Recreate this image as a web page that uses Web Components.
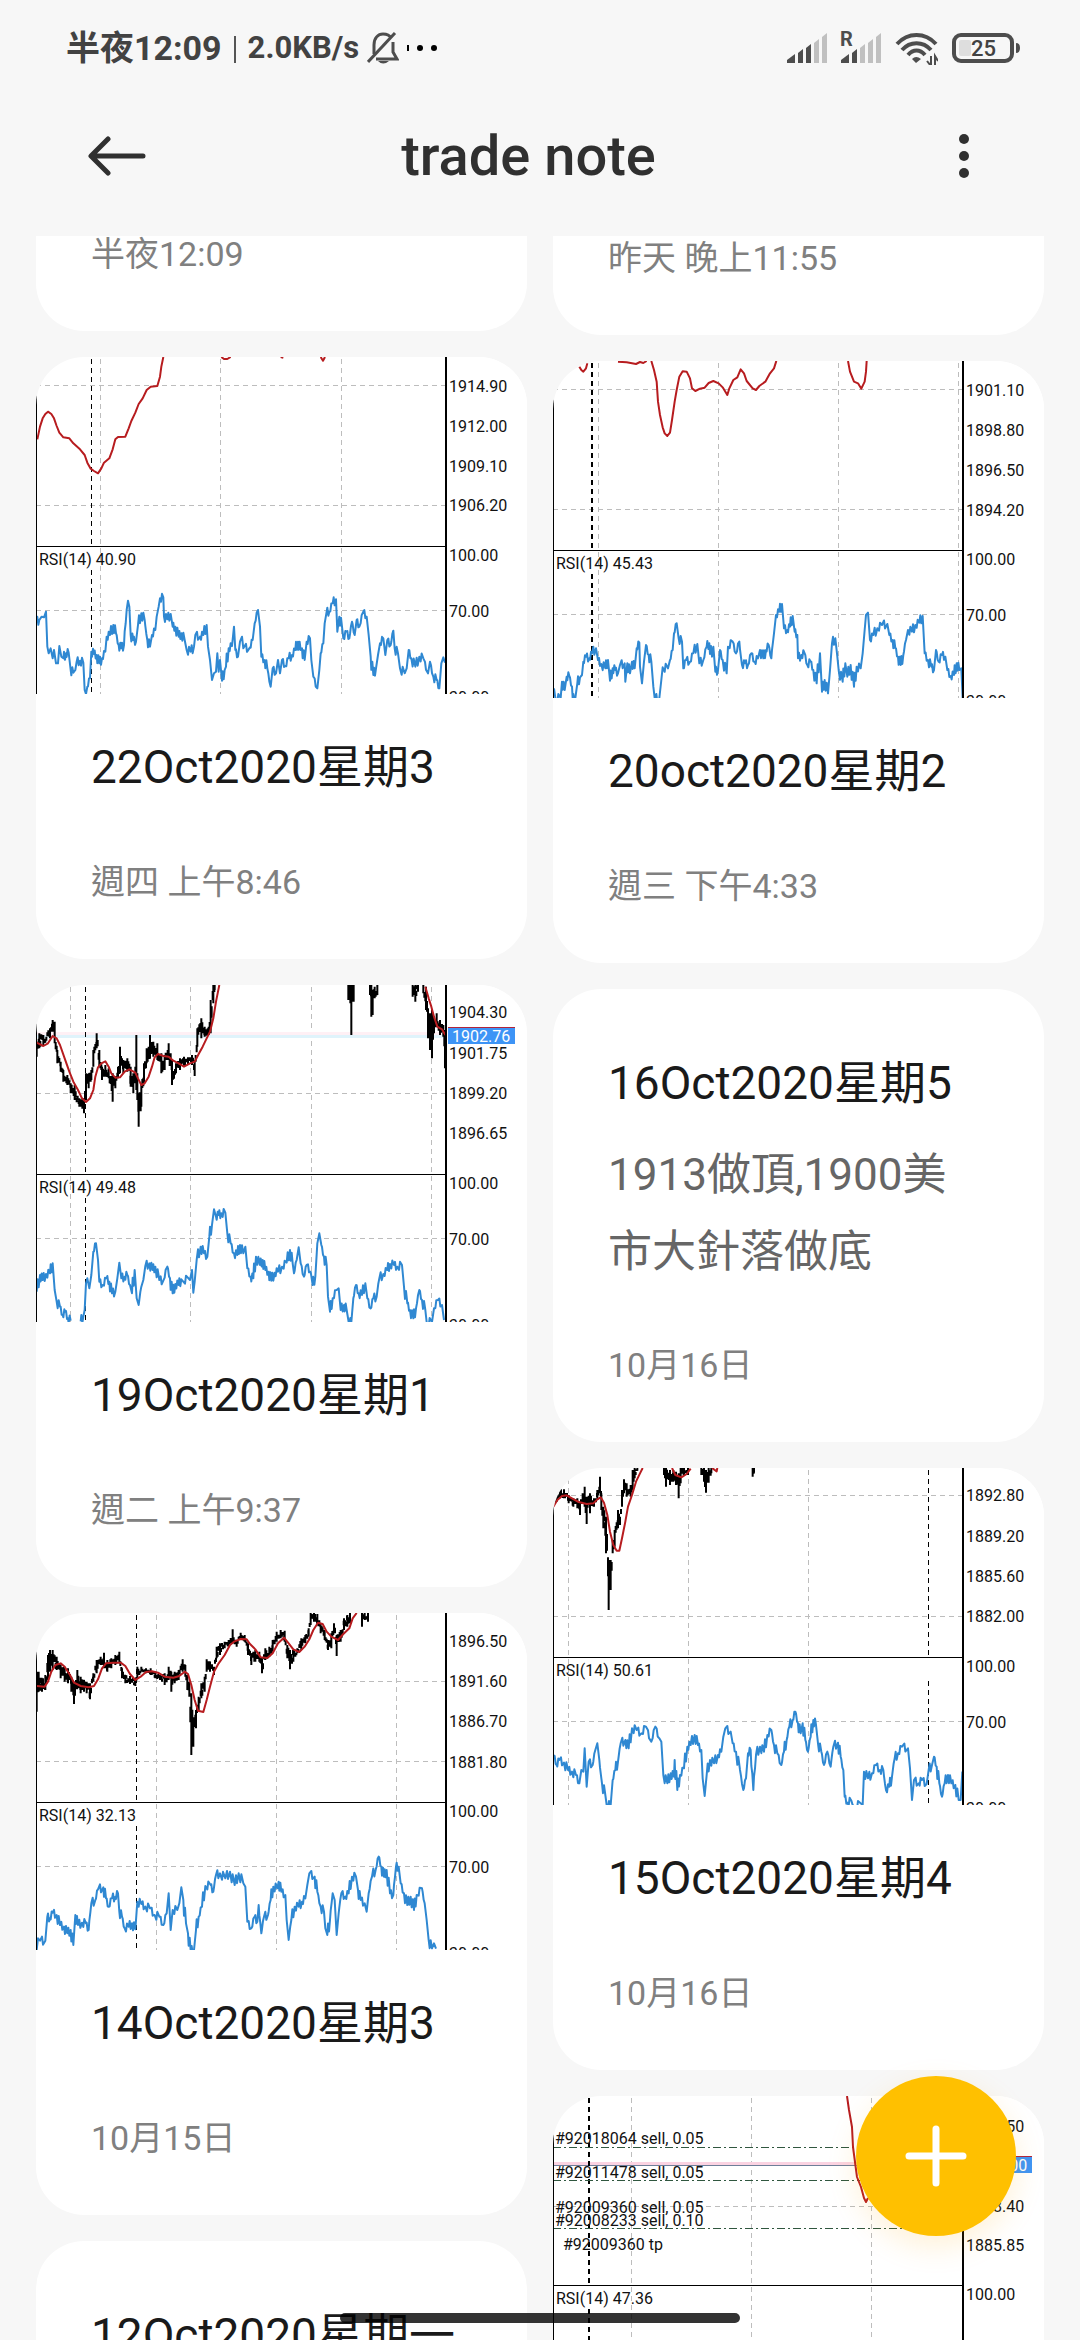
<!DOCTYPE html>
<html lang="zh-Hant">
<head>
<meta charset="utf-8">
<meta name="viewport" content="width=device-width, initial-scale=1">
<title>trade note</title>
<style>
  html, body {
    margin: 0;
    height: 100%;
  }

  body {
    background: #f7f7f7;
    color: #1a1a1a;
    font-family: Roboto, "Noto Sans CJK TC", sans-serif;
    overflow: hidden;
  }
</style>
</head>
<body>

<note-app>
  <status-bar slot="status"></status-bar>
  <app-header slot="header">trade note</app-header>

  <note-column slot="left">
    <note-card>
      <time slot="date">半夜12:09</time>
    </note-card>
    <note-card>
      <price-chart slot="cover" name="oct22"></price-chart>
      <span slot="title">22Oct2020星期3</span>
      <time slot="date">週四 上午8:46</time>
    </note-card>
    <note-card>
      <price-chart slot="cover" name="oct19"></price-chart>
      <span slot="title">19Oct2020星期1</span>
      <time slot="date">週二 上午9:37</time>
    </note-card>
    <note-card>
      <price-chart slot="cover" name="oct14"></price-chart>
      <span slot="title">14Oct2020星期3</span>
      <time slot="date">10月15日</time>
    </note-card>
    <note-card>
      <span slot="title">12Oct2020星期一</span>
    </note-card>
  </note-column>

  <note-column slot="right">
    <note-card>
      <time slot="date">昨天 晚上11:55</time>
    </note-card>
    <note-card>
      <price-chart slot="cover" name="oct20"></price-chart>
      <span slot="title">20oct2020星期2</span>
      <time slot="date">週三 下午4:33</time>
    </note-card>
    <note-card>
      <span slot="title">16Oct2020星期5</span>
      <span slot="text">1913做頂,1900美市大針落做底</span>
      <time slot="date">10月16日</time>
    </note-card>
    <note-card>
      <price-chart slot="cover" name="oct15"></price-chart>
      <span slot="title">15Oct2020星期4</span>
      <time slot="date">10月16日</time>
    </note-card>
    <note-card>
      <price-chart slot="cover" name="orders"></price-chart>
    </note-card>
  </note-column>

  <add-button slot="action"></add-button>
</note-app>

<script>
// Curves are stored at 3 units per pixel, `origin` is the top left corner.
// price: "x,high,low" envelope, ma and rsi: "x,y" points, ";" starts a new run.
const CHARTS = {
  oct22: {
    origin: [18, 51],
    labels: [['1914.90', 29], ['1912.00', 69], ['1909.10', 109], ['1906.20', 148]],
    cols: [64, 184, 305], rows: [28, 148], cursor: 55, rsiValue: '40.90',
    ma: '22,298 30,260 38,235 46,222 54,215 64,222 72,235 80,258 88,278 100,292 118,295 130,310 150,328 164,345 172,368 182,386 192,393 204,400 214,385 222,368 238,355 248,328 256,298 264,291 286,290 296,265 304,243 316,218 326,192 338,175 350,150 362,140 382,138 390,110 394,80 400,51;574,51 582,57 592,57 602,51;752,51 760,53;872,51 879,62 885,51',
    rsi: '20,845 28,840 35,830 42,832 48,815 52,920 56,940 62,925 68,955 72,930 78,970 84,970 88,918 94,950 100,955 108,940 116,938 122,990 130,998 136,990 140,965 150,962 160,968 164,1050 168,1062 172,1040 180,1015 184,935 192,942 200,945 208,970 216,955 226,935 230,890 240,885 250,855 258,880 266,915 274,925 282,915 290,810 294,782 298,800 302,885 310,900 318,905 324,855 334,820 344,840 352,900 360,920 366,885 376,870 380,830 386,800 390,775 400,772 402,830 412,838 422,822 428,860 436,860 446,890 454,880 464,900 470,930 482,935 492,920 496,885 510,890 520,885 530,855 534,920 540,960 546,1020 552,1000 558,995 562,940 566,995 570,960 576,1022 584,990 588,980 596,925 606,918 612,860 616,930 624,950 630,905 636,890 640,925 660,922 668,900 674,850 684,810 690,860 694,950 704,960 712,985 722,1040 728,985 738,1000 744,960 750,1000 756,960 766,978 776,955 786,945 796,930 804,905 812,930 816,925 824,960 830,905 840,895 844,960 850,1010 862,1045 868,990 872,940 880,910 884,850 890,815 898,815 908,790 918,778 922,875 928,830 936,860 940,895 950,875 958,895 966,845 974,885 980,840 988,860 1000,815 1010,830 1016,885 1022,950 1030,1005 1038,985 1044,945 1050,910 1060,895 1066,945 1072,900 1082,915 1090,872 1094,925 1104,940 1110,985 1124,1000 1130,985 1136,930 1144,955 1156,980 1168,950 1180,955 1194,1000 1200,965 1210,1010 1220,1020 1228,1045 1234,970 1240,952 1245,968'
  },
  oct20: {
    origin: [39, 63],
    labels: [['1901.10', 29], ['1898.80', 69], ['1896.50', 109], ['1894.20', 149]],
    cols: [45, 165, 285, 405], rows: [28, 148], cursor: 39, boldCursor: true, rsiValue: '45.43',
    ma: '118,80 124,90 130,95 138,85 142,70;234,65 260,67 288,72 300,66 310,69 320,63;334,63 342,90 350,125 354,185 360,225 368,262 374,280 382,288 390,278 396,240 404,185 410,150 418,110 428,94 440,95 450,115 456,145 466,153 480,146 494,143 506,129 520,123 536,130 548,142 562,165 568,145 580,120 592,112 602,88 612,100 620,123 638,145 648,150 658,138 676,125 690,100 702,85 709,63;924,63 930,95 942,125 954,130 964,146 974,125 978,95 980,63',
    rsi: '42,1045 46,1074 62,1074 66,1025 74,1050 80,1010 88,1008 96,1040 98,1074 106,1074 112,1030 120,1012 126,1005 130,965 138,950 148,955 156,940 168,925 174,960 184,972 196,985 204,960 210,1022 218,985 226,990 234,1000 240,975 254,970 256,1025 262,970 270,1000 276,965 284,985 290,925 298,908 300,980 306,1030 312,965 318,915 326,945 334,965 340,1040 344,1074 358,1074 364,1020 368,982 384,985 390,960 398,930 402,880 410,850 416,895 426,905 430,985 438,960 450,965 460,940 472,912 478,970 490,960 500,920 508,910 516,950 520,920 526,995 534,990 540,930 548,960 560,1000 564,920 578,905 588,940 598,905 606,975 616,970 624,975 634,940 644,965 654,955 660,930 670,955 678,930 686,915 694,955 702,880 708,825 718,815 726,792 732,865 742,870 750,860 758,828 764,875 772,885 774,955 784,945 794,940 802,975 812,965 820,990 830,1030 840,940 846,1055 854,1020 864,1060 870,990 876,910 886,895 892,950 896,990 908,1025 916,970 922,1010 932,975 942,1040 950,980 962,985 968,940 974,870 978,825 984,818 990,900 1000,885 1012,865 1026,855 1042,852 1048,885 1058,900 1066,925 1074,950 1082,975 1090,945 1098,900 1104,870 1116,875 1126,855 1138,848 1148,828 1154,940 1164,960 1174,980 1182,990 1188,930 1196,965 1206,945 1216,950 1222,990 1232,1008 1242,1005 1250,970 1258,990 1264,985 1268,1074'
  },
  oct19: {
    origin: [18, 45],
    labels: [['1904.30', 27], ['1901.75', 68], ['1899.20', 108], ['1896.65', 148]],
    cols: [34, 154, 275, 395], rows: [108], cursor: 49, rsiValue: '49.48',
    bid: { y: 50, line: '#e0f3fb', size: 3, ask: '#fff0f5', top: 42, text: '1902.76' },
    price: '20,215,260 28,190,235 40,195,225 60,175,205 68,150,185 74,155,220 82,240,280 92,275,305 100,300,335 112,315,345 122,340,370 134,345,390 148,385,410 162,385,430 168,310,390 176,310,355 184,300,330 190,240,290 200,190,235 208,240,290 216,290,330 226,285,320 236,295,325 248,310,395 256,320,355 264,290,325 270,230,310 280,270,310 292,265,305 302,290,350 310,310,370 316,290,340 319,195,360 322,310,390 326,370,470 334,340,410 342,280,340 350,235,280 360,195,265 370,215,260 382,220,270 394,250,310 404,255,300 416,220,270 426,270,345 438,280,310 450,265,300 462,260,290 474,262,285 486,255,285 494,270,318 502,175,230 514,145,205 524,170,200 536,170,195 542,90,190 550,45,100 554,45,60;955,45,90 961,45,100 964,45,195 967,45,95 971,45,95;1020,45,75 1024,45,140 1028,60,135 1034,50,85 1042,45,75;1148,45,80 1156,45,95 1164,45,65;1180,45,70 1188,50,120 1194,115,205 1200,130,240 1206,120,265 1212,140,190 1220,130,170 1230,150,195 1240,165,200 1245,180,295',
    ma: '20,218 40,228 54,220 68,198 80,205 90,225 104,265 118,305 130,335 144,360 156,385 168,396 180,385 190,360 196,320 204,292 214,280 226,274 236,290 244,310 256,323 270,322 284,305 298,298 316,308 324,325 334,345 344,340 356,320 366,290 374,262 384,252 400,258 416,260 430,272 446,280 462,290 480,280 494,275 506,252 518,230 530,205 540,185 550,145 558,95 564,65 568,45;1186,50 1196,85 1204,110 1212,140 1222,170 1236,178 1246,195',
    rsi: '20,965 30,915 38,930 48,912 60,910 68,880 74,960 80,995 90,1010 98,1035 106,1025 114,1045 122,1052;152,1054 160,1040 164,1020 168,940 172,925 178,955 184,915 190,845 198,820 204,870 208,935 218,945 230,925 238,935 246,970 256,965 262,925 268,878 274,925 284,920 292,915 300,945 306,970 314,900 320,985 326,1005 334,950 340,930 346,888 358,880 368,900 376,890 388,930 400,932 412,890 420,925 428,970 436,942 446,945 454,928 480,930 486,900 490,968 494,935 500,870 512,830 522,850 532,860 538,800 546,765 552,718 558,740 566,735 574,730 586,728 592,790 602,820 612,850 622,855 630,825 640,850 646,830 652,895 662,920 670,925 678,860 690,885 698,870 706,900 716,905 724,932 734,908 744,905 756,890 770,878 780,840 788,880 792,910 800,870 806,832 812,880 822,920 830,885 842,905 848,945 856,920 862,820 868,790 874,825 882,860 890,885 894,980 900,1025 908,985 920,960 926,955 932,1020 942,1005 950,1020 956,1056 964,1056 970,985 978,945 986,970 996,975 1006,940 1012,985 1022,1015 1030,985 1040,980 1048,925 1060,912 1072,900 1080,882 1092,885 1102,890 1116,885 1122,950 1132,1000 1140,1020 1150,1045 1158,1015 1168,960 1176,990 1186,1020 1190,1056 1206,1056 1212,1015 1224,990 1236,1005 1242,1050'
  },
  oct14: {
    origin: [18, 39],
    labels: [['1896.50', 28], ['1891.60', 68], ['1886.70', 108], ['1881.80', 149]],
    cols: [120, 240, 360], rows: [68, 148], cursor: 100, rsiValue: '32.13',
    price: '20,215,335 26,215,275 36,235,275 46,225,270 54,165,240 60,150,215 68,150,210 80,170,210 92,195,235 104,200,245 114,205,250 124,230,275 132,245,312 142,210,265 152,230,280 162,240,275 170,245,280 180,250,298 190,220,245 200,180,220 212,170,195 222,158,205 232,180,215 244,175,205 256,165,195 268,155,190 276,205,235 286,225,250 300,228,252 316,235,258 322,200,235 334,200,215 348,205,220 362,205,225 376,215,235 390,225,240 404,220,255 416,200,240 424,215,275 434,215,250 446,210,240 458,178,215 466,195,230 472,225,270 478,245,290 484,280,465 490,360,440 498,330,385 506,290,330 514,250,295 524,230,275 530,178,215 540,185,215 552,200,225 560,140,175 570,130,165 584,125,145 596,120,140 608,88,130 620,120,140 632,98,120 644,105,125 654,130,165 664,160,195 676,150,185 688,155,185 696,175,220 706,145,180 718,140,170 728,120,155 740,95,125 752,90,115 764,92,125 772,135,175 780,150,208 790,150,185 802,145,160 814,115,150 826,105,130 836,85,110 842,39,75 852,39,65 862,42,75 872,70,100 884,90,120 894,120,150 904,100,145 912,70,100 920,105,168 932,90,125 942,55,90 952,45,80 960,39,70;996,39,80 1004,39,60 1014,39,65',
    ma: '20,258 44,260 54,245 64,215 76,195 92,190 104,200 120,225 132,248 152,258 176,262 192,258 204,238 216,205 228,190 250,188 272,188 286,198 300,222 316,240 332,230 348,216 366,214 384,218 404,230 430,233 448,228 464,215 474,222 484,255 494,300 504,332 520,336 530,300 540,260 552,215 566,190 584,165 600,135 612,125 632,117 650,118 660,132 676,148 692,172 712,174 728,160 744,130 762,113 776,130 790,148 808,156 824,140 838,118 850,90 864,68 878,72 890,95 904,110 924,120 940,102 958,85 968,55 980,39',
    rsi: '20,1050 24,1015 30,1022 46,1022 52,950 60,955 68,938 80,945 90,975 102,980 112,1000 122,990 130,1035 136,945 144,975 156,968 168,970 176,990 184,910 196,900 204,868 220,862 228,895 236,920 246,895 256,890 264,880 268,935 276,950 284,985 296,980 306,970 316,988 322,905 334,912 346,920 360,925 374,945 388,950 400,975 410,940 416,880 422,990 428,930 442,930 448,910 454,862 460,900 468,970 474,1000 482,1050 492,1050 498,990 506,950 516,920 526,858 542,855 550,875 558,825 570,820 586,835 600,815 614,855 626,820 640,850 646,860 652,965 664,985 674,950 682,965 686,915 694,1000 702,950 714,945 722,900 730,860 742,865 746,845 754,875 766,885 770,960 776,1020 784,960 794,920 806,920 816,905 826,895 832,855 838,820 854,830 862,875 872,920 882,935 886,985 892,1005 900,960 908,880 914,900 920,1005 926,940 934,880 946,890 956,880 966,830 978,830 984,870 992,900 1004,910 1010,935 1016,880 1026,830 1038,805 1046,770 1054,800 1062,830 1070,810 1080,880 1090,885 1098,800 1106,800 1112,850 1122,880 1132,915 1142,890 1152,930 1160,885 1176,865 1184,910 1190,960 1196,1020 1206,1045 1212,1030 1218,1046'
  },
  oct15: {
    origin: [39, 54],
    labels: [['1892.80', 27], ['1889.20', 68], ['1885.60', 108], ['1882.00', 148]],
    cols: [15, 135, 255], rows: [27, 148], cursor: 375, rsiValue: '50.61',
    price: '44,145,160 50,130,155 60,115,145 72,118,145 86,135,160 100,145,170 112,145,175 120,155,195 128,130,160 134,110,170 140,140,222 150,130,190 162,145,170 172,120,150 180,80,130 184,130,180 190,170,235 198,200,310 206,330,480 212,330,420 218,270,310 224,240,290 234,180,235 240,200,225 246,120,170 252,88,130 260,100,140 272,105,140 278,60,120 284,54,85 292,54,62;372,54,75 378,54,110 390,60,105 400,60,95 408,65,105 416,70,145 422,54,100 432,54,75 444,54,75;484,54,75 492,54,95 498,60,128 506,54,98 514,54,70;638,54,80 642,54,68',
    ma: '40,170 52,150 66,138 80,136 96,145 116,156 140,162 160,160 172,148 182,142 192,158 202,195 210,245 220,285 230,302 238,302 246,265 256,215 264,170 276,135 288,95 300,70 308,54;396,54 406,75 424,82 440,72 452,56;516,54 530,64 532,54',
    rsi: '42,915 50,945 58,930 72,938 84,960 96,965 108,975 118,1000 124,960 130,965 134,895 140,1010 146,935 158,945 166,900 172,880 178,930 186,1000 196,1035 200,1065 212,1065 218,990 226,960 234,935 242,880 256,870 266,895 276,835 290,840 304,850 318,830 334,875 346,830 358,865 364,875 370,975 382,1000 392,970 402,980 404,930 412,1020 420,975 432,955 442,890 452,885 464,855 474,885 484,900 488,985 494,1038 500,975 510,930 522,940 534,915 544,905 550,860 556,835 572,845 578,880 588,905 600,960 610,1020 618,985 624,910 632,900 640,1020 648,915 660,890 672,905 682,855 694,840 702,885 712,910 724,945 732,905 740,870 748,830 758,810 766,785 774,820 782,850 788,820 796,870 804,905 812,860 820,810 828,825 834,880 844,905 852,945 862,905 872,950 880,890 894,878 902,920 910,960 914,1040 922,1058 934,1052 938,1065 968,1065 972,965 984,985 996,970 1008,945 1020,960 1030,960 1038,1020 1048,1010 1056,980 1064,925 1074,910 1086,890 1104,895 1110,955 1116,1050 1122,990 1136,1000 1146,990 1160,1002 1166,960 1176,945 1182,920 1190,950 1198,1000 1206,1040 1214,1000 1224,975 1234,1000 1246,1005 1256,1050 1262,1050 1267,965'
  },
  orders: {
    origin: [0, 0],
    labels: [['1893.50', 30], ['1888.40', 110], ['1885.85', 149]],
    cols: [78, 198, 318], rows: [110], cursor: 36, boldCursor: true, rsiValue: '47.36',
    bid: { y: 69, line: '#6f7f99', size: 1, ask: '#fbd3e2', top: 60, text: '1891.00' },
    orders: [['#92018064 sell, 0.05', 2, 42, 51], ['#92011478 sell, 0.05', 2, 76, 84], ['#92008233 sell, 0.10', 2, 124, 132], ['#92009360 sell, 0.05', 2, 111], ['#92009360 tp', 10, 148]],
    ma: '882,0 888,42 897,93 900,153 906,198 912,243 924,273 933,306 939,318 945,306',
    rsi: '0,1000 60,900'
  }
};

class NoteApp extends HTMLElement {
  constructor() {
    super();
    this.attachShadow({ mode: 'open' });
    this.shadowRoot.innerHTML = `
    <style>
      :host {
        display: flex;
        flex-direction: column;
        height: 100vh;
        position: relative;
        overflow: hidden;
      }

      /* The list is scrolled, its first row is cut by the header */
      main {
        flex: 1;
        min-height: 0;
        overflow: hidden;
        display: grid;
        grid-template-columns: 1fr 1fr;
        align-items: start;
        gap: 26px;
        padding: 0 36px;
      }

      .left {
        margin-top: -57px;
      }

      .right {
        margin-top: -53px;
      }

      .action {
        position: absolute;
        right: 64px;
        bottom: 104px;
      }

      .home {
        position: absolute;
        left: 50%;
        bottom: 17px;
        width: 400px;
        height: 10px;
        margin-left: -200px;
        border-radius: 5px;
        background: rgba(0, 0, 0, 0.8);
      }
    </style>
    <slot name="status"></slot>
    <slot name="header"></slot>
    <main>
      <div class="left"><slot name="left"></slot></div>
      <div class="right"><slot name="right"></slot></div>
    </main>
    <div class="action"><slot name="action"></slot></div>
    <div class="home"></div>
    `;
  }
}

class StatusBar extends HTMLElement {
  constructor() {
    super();
    this.attachShadow({ mode: 'open' });
    this.shadowRoot.innerHTML = `
    <style>
      :host {
        display: flex;
        justify-content: space-between;
        align-items: center;
        height: 96px;
        padding: 0 60px 0 66px;
        color: #424242;
        font-weight: 500;
      }

      div {
        display: flex;
        align-items: center;
      }

      .time {
        font-size: 34px;
        line-height: 40px;
        font-weight: 700;
      }

      .bar {
        width: 2px;
        height: 27px;
        margin: 2px 12px 0;
        background: #555;
      }

      .speed {
        font-size: 31px;
        line-height: 40px;
        font-weight: 700;
      }

      .bell,
      .dots {
        margin-left: 8px;
      }

      .icons {
        gap: 14px;
      }

      svg {
        display: block;
      }
    </style>
    <div>
      <span class="time">半夜12:09</span>
      <span class="bar"></span>
      <span class="speed">2.0KB/s</span>
      <svg class="bell" width="32" height="32" fill="none" stroke="#4d4d4d" stroke-width="3">
        <path d="M7 22V13C7 6 11 2 16 2C20 2 23 4 24 6M26 10V20L30 27H9"/>
        <path d="M1 30L28 1"/>
        <path d="M11 29H22Q16 34 11 29Z" fill="#4d4d4d" stroke="none"/>
      </svg>
      <svg class="dots" width="30" height="8" fill="#000">
        <rect y="1" width="2" height="6"/><circle cx="13" cy="4" r="3"/><circle cx="27" cy="4" r="3"/>
      </svg>
    </div>
    <div class="icons">
      <svg width="40" height="30">
        <g fill="#4d4d4d"><path d="M0 30V27L8 21V30Z"/><path d="M11 30V20L16 16V30Z"/><path d="M19 30V15L24 11V30Z"/></g>
        <g fill="#c0c0c0"><path d="M27 30V10L32 6V30Z"/><path d="M35 30V4L40 0V30Z"/></g>
      </svg>
      <svg width="40" height="30" overflow="visible">
        <g fill="#4d4d4d"><path d="M0 30V27L8 21V30Z"/><path d="M11 30V20L16 16V30Z"/></g>
        <g fill="#c0c0c0"><path d="M19 30V15L24 11V30Z"/><path d="M27 30V10L32 6V30Z"/><path d="M35 30V4L40 0V30Z"/></g>
        <text x="-1" y="13" font-size="20" font-weight="700" fill="#4d4d4d">R</text>
      </svg>
      <svg width="43" height="34" viewBox="-1 -2 43 34" fill="none" stroke="#4d4d4d" stroke-width="4">
        <path d="M1 11C12 -1 29 -1 40 11"/>
        <path d="M6 17C14 8 27 8 35 17"/>
        <path d="M12 22C17 16 24 16 29 22"/>
        <path d="M16 26Q20 22 25 26L20 30Z" fill="#4d4d4d" stroke="none"/>
        <path d="M35 23V33M31 28L35 33M39 33V23L42 28" stroke-width="2"/>
      </svg>
      <svg width="68" height="30">
        <rect x="2" y="2" width="58" height="26" rx="7" fill="none" stroke="#4d4d4d" stroke-width="4"/>
        <path d="M64 10Q68 10 68 15T64 20Z" fill="#4d4d4d"/>
        <rect x="7" y="7" width="12" height="16" rx="2" fill="#dedede"/>
        <text x="19" y="23" font-size="22" font-weight="500" fill="#424242">25</text>
      </svg>
    </div>
    `;
  }
}

class AppHeader extends HTMLElement {
  constructor() {
    super();
    this.attachShadow({ mode: 'open' });
    this.shadowRoot.innerHTML = `
    <style>
      :host {
        display: flex;
        align-items: center;
        height: 120px;
        padding: 0 99px 20px 76px;
        color: #303030;
      }

      h1 {
        flex: 1;
        margin: 0;
        text-align: center;
        font-size: 56px;
        line-height: 64px;
        font-weight: 500;
      }

      button {
        display: flex;
        align-items: center;
        width: 80px;
        height: 80px;
        padding: 0 12px;
        border: none;
        background: none;
        cursor: pointer;
      }

      .menu {
        justify-content: flex-end;
        padding: 0;
        overflow: visible;
      }

      .menu svg {
        margin-right: -12px;
      }

      svg {
        flex: none;
      }
    </style>
    <button aria-label="返回">
      <svg width="58" height="40" fill="none" stroke="#303030" stroke-width="5" stroke-linecap="round" stroke-linejoin="round">
        <path d="M55 20H4M20 3L3 20L20 37"/>
      </svg>
    </button>
    <h1><slot></slot></h1>
    <button class="menu" aria-label="更多">
      <svg width="58" height="44" fill="#303030">
        <circle cx="29" cy="5" r="5"/><circle cx="29" cy="22" r="5"/><circle cx="29" cy="39" r="5"/>
      </svg>
    </button>
    `;
  }
}

class NoteColumn extends HTMLElement {
  constructor() {
    super();
    this.attachShadow({ mode: 'open' });
    this.shadowRoot.innerHTML = `
    <style>
      :host {
        display: flex;
        flex-direction: column;
        gap: 26px;
      }
    </style>
    <slot></slot>
    `;
  }
}

class NoteCard extends HTMLElement {
  constructor() {
    super();
    this.attachShadow({ mode: 'open' });
  }

  connectedCallback() {
    const has = (name) => this.querySelector(`[slot="${name}"]`);
    const lead = has('cover') ? 'after-cover' : has('title') ? '' : 'date-only';

    this.shadowRoot.innerHTML = `
    <style>
      :host {
        display: block;
        border-radius: 48px;
        background: #fff;
        overflow: hidden;
      }

      .content {
        padding: 67px 56px 57px 55px;
      }

      .after-cover {
        padding-top: 46px;
      }

      .date-only {
        padding-top: 55px;
      }

      h2, p {
        margin: 0;
        font-weight: 400;
      }

      h2 {
        font-size: 46px;
        line-height: 54px;
      }

      .text {
        margin-top: 27px;
        font-size: 44px;
        line-height: 77px;
        color: #666;
      }

      .date {
        font-size: 34px;
        line-height: 40px;
        color: #808080;
      }

      h2 + .date {
        margin-top: 68px;
      }

      .text + .date {
        margin-top: 54px;
      }
    </style>
    <slot name="cover"></slot>
    <div class="content ${lead}">
      ${has('title') ? '<h2><slot name="title"></slot></h2>' : ''}
      ${has('text') ? '<p class="text"><slot name="text"></slot></p>' : ''}
      ${has('date') ? '<p class="date"><slot name="date"></slot></p>' : ''}
    </div>
    `;
  }
}

class PriceChart extends HTMLElement {
  constructor() {
    super();
    this.attachShadow({ mode: 'open' });
  }

  connectedCallback() {
    this.chart = CHARTS[this.getAttribute('name')];
    this.render();
  }

  render() {
    const { origin, labels, cols, rows, cursor, boldCursor, rsiValue, bid, price, ma, rsi, orders = [] } = this.chart;

    this.shadowRoot.innerHTML = `
    <style>
      :host {
        display: block;
      }

      svg {
        display: block;
        width: 100%;
        height: auto;
      }

      text {
        font-size: 16px;
        fill: #111;
      }

      .grid {
        stroke: #bdbdbd;
        stroke-width: 1;
        stroke-dasharray: 5 4;
      }

      .cursor {
        stroke: #000;
        stroke-width: 1;
        stroke-dasharray: 5 4;
      }

      .cursor.bold {
        stroke-width: 2;
      }

      .order {
        stroke: #30573f;
        stroke-width: 1;
        stroke-dasharray: 8 3 2 3;
      }

      .curve {
        fill: none;
        stroke-width: 2;
        stroke-linejoin: round;
      }

      .curve path {
        vector-effect: non-scaling-stroke;
      }
    </style>
    <svg viewBox="0 0 491 337">
      <g class="grid" shape-rendering="crispEdges">
        ${cols.map(x => `<path d="M${x} 2V189M${x} 191V337"/>`).join('')}
        ${[...rows, 253].map(y => `<path d="M0 ${y}H410"/>`).join('')}
      </g>
      ${bid ? `
        <rect y="${bid.y - 3}" width="409" height="3" fill="${bid.ask}"/>
        <rect y="${bid.y}" width="409" height="${bid.size}" fill="${bid.line}"/>` : ''}
      <path class="cursor ${boldCursor ? 'bold' : ''}" d="M${cursor} 2V189M${cursor} 213V337" shape-rendering="crispEdges"/>
      ${orders.map(([text, x, y, line]) => `
        ${line ? `<path class="order" d="M0 ${line}H409" shape-rendering="crispEdges"/>` : ''}
        <text x="${x}" y="${y + 6}">${text}</text>`).join('')}
      <g class="curve" transform="scale(.33333) translate(${-origin[0]} ${-origin[1]})">
        <path stroke="#000" d="${price ? this.getCandles(price) : ''}"/>
        <path stroke="#b71c1f" d="${this.getLine(ma)}"/>
        <path stroke="#2f88d2" d="${this.getLine(rsi, 12)}"/>
      </g>
      <path d="M0 38H1V337H0ZM0 189H410V190H0ZM409 0H411V337H409Z" shape-rendering="crispEdges"/>
      <rect x="411" width="80" height="337" fill="#fff"/>
      <text x="3" y="208">RSI(14) ${rsiValue}</text>
      ${labels.map(([text, y]) => `<text x="413" y="${y + 6}">${text}</text>`).join('')}
      ${bid ? `
        <rect x="412" y="${bid.top}" width="67" height="17" fill="#3d94f6"/>
        <rect x="412" y="${bid.top}" width="67" height="1" fill="#b0243c"/>
        <text x="416" y="${bid.top + 15}" style="fill: #fff">${bid.text}</text>` : ''}
      <text x="413" y="204">100.00</text>
      <text x="413" y="260">70.00</text>
      <text x="413" y="346">30.00</text>
    </svg>
    `;
  }

  // `noise` adds a small tick halfway between neighbouring points
  getLine(data, noise = 0) {
    return data.split(';').map(run => {
      const points = run.split(' ').map(point => point.split(',').map(Number));
      let path = 'M' + points[0];
      for (let i = 1; i < points.length; i++) {
        const [x, y] = points[i];
        const [lastX, lastY] = points[i - 1];
        if (noise && x - lastX > 7) {
          const mid = (lastX + x) / 2;
          const tick = i % 2 ? noise : -noise;
          path += `L${mid - 2} ${(lastY + y) / 2 - tick}L${mid + 1} ${(lastY + y) / 2 + tick}`;
        }
        path += `L${x} ${y}`;
      }
      return path;
    }).join('');
  }

  // One bar per pixel, the bars keep inside the high/low envelope
  getCandles(data) {
    let path = '';
    let seed = 7;
    data.split(';').forEach(run => {
      const keys = run.split(' ').map(key => key.split(',').map(Number));
      for (let i = 0; i < keys.length; i++) {
        const [x, high, low] = keys[i];
        path += `M${x} ${high}V${low}`;
        if (!keys[i + 1]) continue;
        const [nextX, nextHigh, nextLow] = keys[i + 1];
        for (let px = x + 3; px < nextX; px += 3) {
          const t = (px - x) / (nextX - x);
          seed = (seed * 73 + 41) % 101;
          const top = high + (nextHigh - high) * t;
          const bottom = low + (nextLow - low) * t;
          const room = (bottom - top) * 0.6;
          path += `M${px} ${Math.round(top + room * seed / 101)}V${Math.round(bottom - room * (100 - seed) / 101)}`;
        }
      }
    });
    return path;
  }
}

class AddButton extends HTMLElement {
  constructor() {
    super();
    this.attachShadow({ mode: 'open' });
    this.shadowRoot.innerHTML = `
    <style>
      :host {
        display: block;
      }

      button {
        display: flex;
        align-items: center;
        justify-content: center;
        width: 160px;
        height: 160px;
        padding: 0;
        border: none;
        border-radius: 50%;
        background: #ffc000;
        box-shadow: 0 10px 30px rgba(255, 170, 0, 0.16);
        cursor: pointer;
      }
    </style>
    <button aria-label="新增">
      <svg width="62" height="62" stroke="#fff" stroke-width="7" stroke-linecap="round">
        <path d="M31 4V58M4 31H58"/>
      </svg>
    </button>
    `;
  }
}

customElements.define('note-app', NoteApp);
customElements.define('status-bar', StatusBar);
customElements.define('app-header', AppHeader);
customElements.define('note-column', NoteColumn);
customElements.define('note-card', NoteCard);
customElements.define('price-chart', PriceChart);
customElements.define('add-button', AddButton);
</script>
</body>
</html>
